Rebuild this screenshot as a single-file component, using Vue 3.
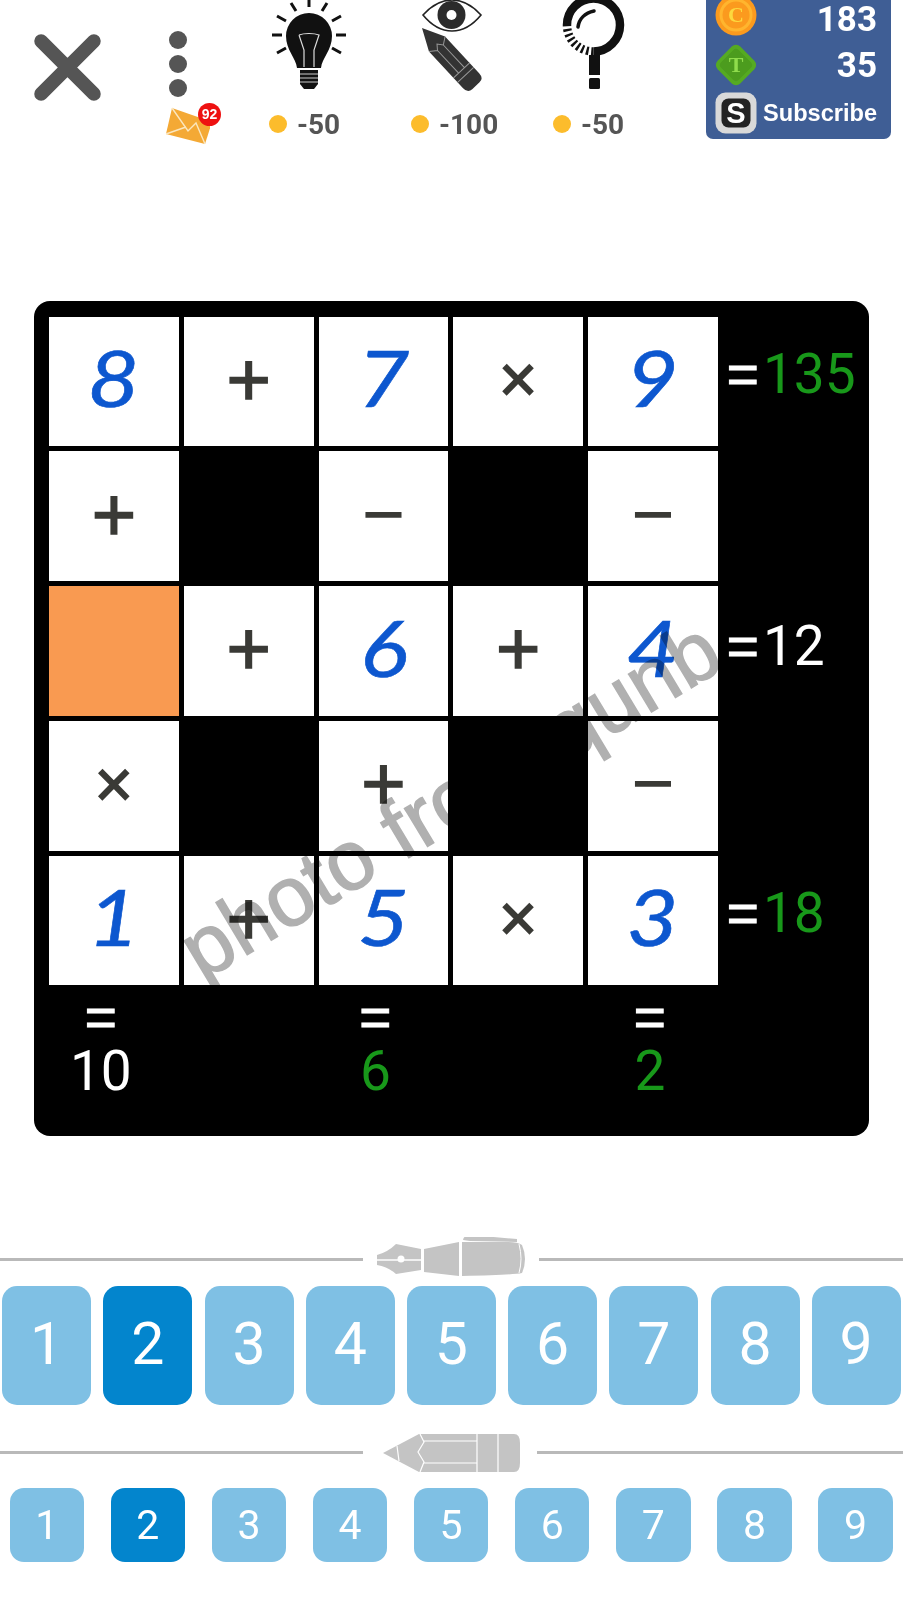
<template>
  <div class="screen">
    <header class="topbar">
      <div class="close-col">
        <svg class="close-icon" viewBox="0 0 66 66">
          <path d="M7 7 L59 59 M59 7 L7 59" />
        </svg>
      </div>
      <div class="menu-col">
        <span class="dot"></span>
        <span class="dot"></span>
        <span class="dot"></span>
        <div class="mail">
          <svg class="mail-icon" viewBox="164 100 46 46">
            <path d="M172 106 L212 120 L205 142 L166 132 Z" fill="#f4a935" />
            <path d="M172 106 L188 129 L196 121 L205 142 M166 132 L186 125" fill="none" stroke="#fbe7bf" stroke-width="1.4" />
          </svg>
          <span class="badge">92</span>
        </div>
      </div>

      <div class="hint">
        <svg class="hint-icon" viewBox="259 0 100 92">
          <g stroke="#111" stroke-width="3" stroke-linecap="butt">
            <path d="M309 0 V7 M291 3 L296 11 M327 3 L322 11 M277 16 L286 21 M341 16 L332 21 M272 35 H282 M336 35 H346 M277 53 L286 48 M341 53 L332 48" />
          </g>
          <path d="M297 68 C296 58 286 50 286 36 A23 23 0 0 1 332 36 C332 50 322 58 321 68 Z" fill="#111" />
          <path d="M299 35 C304 33 314 33 319 35 L314 50 V67 M299 35 L304 50 V67" fill="none" stroke="#ddd" stroke-width="1.2" />
          <path d="M300 70 H318 V84 L314 89 H304 L300 84 Z" fill="#111" />
          <path d="M300 74 H318 M300 78 H318 M300 82 H318" stroke="#ccc" stroke-width="1" />
        </svg>
        <div class="cost"><span class="coin"></span>-50</div>
      </div>

      <div class="hint">
        <svg class="hint-icon" viewBox="401 0 100 92">
          <path d="M423 15 C432 5 442 0 452 0 C462 0 472 5 481 15 C472 26 462 31 452 31 C442 31 432 26 423 15 Z" fill="#fff" stroke="#222" stroke-width="1.6" />
          <circle cx="451.5" cy="15" r="14" fill="#2b2b2b" />
          <circle cx="451.5" cy="15" r="5" fill="#fff" />
          <g transform="rotate(47 422 28)">
            <path d="M0 0 L22 -11 H72 Q79 -11 79 -5 V5 Q79 11 72 11 H22 Z" transform="translate(422 28)" fill="#333" />
            <path d="M22 -11 L27 -4 L22 0 L27 4 L22 11 M27 -4 H58 M27 4 H58 M58 -11 V11 M64 -11 V11" transform="translate(422 28)" fill="none" stroke="#999" stroke-width="1" />
          </g>
        </svg>
        <div class="cost"><span class="coin"></span>-100</div>
      </div>

      <div class="hint">
        <svg class="hint-icon" viewBox="543 0 100 92">
          <path d="M567 25 A26.5 26.5 0 1 1 593.5 51.5" fill="none" stroke="#111" stroke-width="8.5" />
          <path d="M593.5 51.5 A26.5 26.5 0 0 1 567 25" fill="none" stroke="#111" stroke-width="8.5" stroke-dasharray="2.4 2.6" />
          <path d="M578 27 C579 19 585 13 594 11" fill="none" stroke="#111" stroke-width="3.5" stroke-linecap="round" />
          <path d="M589 55 H600 V75 H589 Z" fill="#111" />
          <rect x="589" y="78" width="11" height="11" rx="1.5" fill="#111" />
        </svg>
        <div class="cost"><span class="coin"></span>-50</div>
      </div>

      <div class="wallet">
        <div class="wallet-row">
          <svg class="wallet-icon" viewBox="0 0 42 42">
            <circle cx="21" cy="21" r="20.5" fill="#fb9a1e" />
            <circle cx="21" cy="21" r="15" fill="none" stroke="#ffb52e" stroke-width="3" />
            <text x="21" y="28" class="coin-letter" fill="#fcd83e">C</text>
          </svg>
          <span class="wallet-value first-value">183</span>
        </div>
        <div class="wallet-row">
          <svg class="wallet-icon" viewBox="0 0 42 42">
            <rect x="5" y="5" width="32" height="32" rx="6" transform="rotate(45 21 21)" fill="#55aa22" />
            <rect x="8.5" y="8.5" width="25" height="25" rx="4" transform="rotate(45 21 21)" fill="#4c9c1e" />
            <text x="21" y="28" class="coin-letter" fill="#8fdc4c">T</text>
          </svg>
          <span class="wallet-value">35</span>
        </div>
        <div class="wallet-row sub-row">
          <svg class="wallet-icon" viewBox="0 0 42 42">
            <rect x="0.5" y="0.5" width="41" height="41" rx="10" fill="#d9d9d9" />
            <rect x="6.5" y="6.5" width="29" height="29" rx="7" fill="#232323" />
            <text x="21" y="31" class="s-letter">S</text>
          </svg>
          <span class="subscribe">Subscribe</span>
        </div>
      </div>
    </header>

    <main class="board">
      <template v-for="(item, i) in boardItems" :key="i">
        <div v-if="item.type === 'num'" class="cell num"><span>{{ item.text }}</span></div>
        <div v-else-if="item.type === 'op'" class="cell op" :class="item.cls">{{ item.text }}</div>
        <div v-else-if="item.type === 'active'" class="cell active"></div>
        <div v-else-if="item.type === 'res'" class="result" :class="{ low: !item.ok }">
          <span class="equals">=</span><span :class="{ ok: item.ok }">{{ item.text }}</span>
        </div>
        <div v-else-if="item.type === 'bottom'" class="bottom-result" :class="item.cls">
          <span class="equals">=</span>
          <span :class="{ ok: item.ok }">{{ item.text }}</span>
        </div>
        <div v-else></div>
      </template>
      <div class="watermark">photo from qunb</div>
    </main>

    <section class="pad">
      <div class="divider first">
        <span class="line"></span>
        <svg class="pen" viewBox="363 1236 176 46">
          <path d="M377 1254 Q388 1251 396 1243 L421 1248 V1269 L396 1273 Q388 1266 377 1264 Z" fill="#c4c4c4" />
          <path d="M377 1259 H421" stroke="#fff" stroke-width="1.6" />
          <circle cx="401" cy="1258" r="3.5" fill="#fff" />
          <path d="M424 1248 L459 1241 V1275 L424 1271 Z" fill="#c4c4c4" />
          <path d="M462 1241 H508 Q518 1241 522 1244 Q528 1258 522 1272 Q512 1274 462 1275 Z" fill="#c4c4c4" />
          <path d="M463 1239 Q464 1234 470 1234 L517 1238 V1241 L470 1240 Z" fill="#c4c4c4" />
          <path d="M519 1243 Q523 1258 519 1272" fill="none" stroke="#fff" stroke-width="1" />
        </svg>
        <span class="line"></span>
      </div>
      <div class="keys big">
        <button v-for="n in 9" :key="n" class="key" :class="{ selected: n === 2 }">{{ n }}</button>
      </div>

      <div class="divider second">
        <span class="line"></span>
        <svg class="pencil" viewBox="363 1430 174 44">
          <path d="M383 1452 L419 1433 H514 Q520 1433 520 1442 V1462 Q520 1471 514 1471 H419 Z" fill="#c4c4c4" />
          <path d="M397 1445 L399 1460 M420 1433 L424 1441 L418 1451 L424 1461 L420 1471 M424 1440 H477 M424 1462 H477 M477 1433 V1471 M498 1433 V1471" fill="none" stroke="#fff" stroke-width="1.2" />
        </svg>
        <span class="line"></span>
      </div>
      <div class="keys small">
        <button v-for="n in 9" :key="n" class="key" :class="{ selected: n === 2 }">{{ n }}</button>
      </div>
    </section>
  </div>
</template>

<script setup>
// Puzzle rows, one letter per cell: digits are filled in, _ is black, o is the selected cell
const rows = [
  { cells: ["8", "+", "7", "×", "9"], res: "135", ok: true },
  { cells: ["+", "_", "–", "_", "–"] },
  { cells: ["o", "+", "6", "+", "4"], res: "12", ok: false },
  { cells: ["×", "_", "+", "_", "–"] },
  { cells: ["1", "+", "5", "×", "3"], res: "18", ok: true },
];

const opClass = { "+": "plus", "–": "minus", "×": "times" };

const toItem = (c) => {
  if (c === "_") return { type: "empty" };
  if (c === "o") return { type: "active" };
  if (/\d/.test(c)) return { type: "num", text: c };
  return { type: "op", text: c, cls: opClass[c] };
};

const boardItems = [];
rows.forEach((row) => {
  row.cells.forEach((c) => boardItems.push(toItem(c)));
  boardItems.push(row.res ? { type: "res", text: row.res, ok: row.ok } : { type: "empty" });
});

boardItems.push({ type: "bottom", text: "10", ok: false, cls: "col1" });
boardItems.push({ type: "empty" });
boardItems.push({ type: "bottom", text: "6", ok: true, cls: "col3" });
boardItems.push({ type: "empty" });
boardItems.push({ type: "bottom", text: "2", ok: true, cls: "col5" });
boardItems.push({ type: "empty" });
</script>

<style>
html,
body {
  margin: 0;
  background: #fff;
}
</style>

<style scoped>
.screen {
  width: 903px;
  height: 1600px;
  overflow: hidden;
  background: #fff;
  font-family: "Liberation Sans", Arial, sans-serif;
}

.topbar {
  display: grid;
  grid-template-columns: 164px 95px 142px 142px 163px 185px;
  height: 140px;
}

.close-col {
  padding: 34px 0 0 34px;
}
.close-icon {
  display: block;
  width: 67px;
  height: 67px;
}
.close-icon path {
  fill: none;
  stroke: #555;
  stroke-width: 13.5;
  stroke-linecap: round;
}

.menu-col {
  display: flex;
  flex-direction: column;
  align-items: flex-start;
  padding-top: 31px;
}
.dot {
  width: 18px;
  height: 18px;
  margin: 0 0 6px 5px;
  border-radius: 50%;
  background: #555;
}
.mail {
  position: relative;
  margin-top: -1px;
}
.mail-icon {
  display: block;
  width: 46px;
  height: 46px;
}
.badge {
  position: absolute;
  left: 34px;
  top: 1px;
  width: 23px;
  height: 23px;
  border-radius: 50%;
  background: #ee1111;
  color: #fff;
  font-size: 14px;
  font-weight: bold;
  line-height: 23px;
  text-align: center;
}

.hint-icon {
  display: block;
  width: 100px;
  height: 92px;
}
.cost {
  display: flex;
  align-items: center;
  gap: 10px;
  margin-top: 17px;
  padding-left: 10px;
  height: 30px;
  color: #555;
  font-family: Roboto, "Liberation Sans", sans-serif;
  font-size: 28px;
  font-weight: bold;
}
.coin {
  width: 18px;
  height: 18px;
  border-radius: 50%;
  background: #fcbc2c;
}

.wallet {
  display: flex;
  flex-direction: column;
  gap: 8px;
  width: 185px;
  height: 139px;
  padding: 0 14px 0 9px;
  box-sizing: border-box;
  overflow: hidden;
  background: #3f5e95;
  border-radius: 0 0 7px 7px;
}
.wallet-row {
  display: flex;
  align-items: center;
  justify-content: space-between;
  height: 42px;
  flex-shrink: 0;
}
.wallet-row:first-child {
  margin-top: -6px;
}
.wallet-row.sub-row {
  margin-top: -2px;
}
.wallet-icon {
  width: 42px;
  height: 42px;
  flex-shrink: 0;
}
.coin-letter {
  font-family: "Liberation Serif", serif;
  font-size: 22px;
  font-weight: bold;
  text-anchor: middle;
}
.s-letter {
  font-family: "Liberation Sans", sans-serif;
  font-size: 29px;
  font-weight: bold;
  fill: #fff;
  text-anchor: middle;
}
.wallet-value {
  color: #fff;
  font-family: Roboto, "Liberation Sans", sans-serif;
  font-size: 35px;
  font-weight: bold;
}
.first-value {
  padding-top: 8px;
}
.subscribe {
  color: #fff;
  font-size: 23.6px;
  font-weight: bold;
  margin-left: 6px;
}

.board {
  position: relative;
  display: grid;
  grid-template-columns: repeat(5, 129.75px) 1fr;
  grid-template-rows: repeat(5, 129.75px) 1fr;
  gap: 5px;
  box-sizing: border-box;
  width: 835.5px;
  height: 835px;
  margin: 161px 0 0 33.5px;
  padding: 15.5px 0 0 15.5px;
  background: #000;
  border-radius: 16px;
}
.cell {
  display: flex;
  align-items: center;
  justify-content: center;
  background: #fff;
}
.cell.active {
  background: #f99a51;
}
.num {
  padding-bottom: 8px;
  color: #0d57cf;
  font-family: Lato, "Liberation Sans", sans-serif;
  font-size: 78px;
  font-style: italic;
}
.num span {
  display: block;
  transform: scaleX(1.15);
  -webkit-text-stroke: 0.6px #0d57cf;
}
.op {
  color: #3a3a36;
  -webkit-text-stroke: 1.6px #3a3a36;
}
.op.plus {
  font-size: 76px;
  padding-bottom: 4px;
}
.op.minus {
  font-size: 62px;
  padding-bottom: 14px;
}
.op.times {
  font-size: 66px;
  padding-bottom: 4px;
}
.result {
  align-self: center;
  padding-bottom: 15px;
  color: #fff;
  font-family: Roboto, "Liberation Sans", sans-serif;
  font-size: 55px;
  white-space: nowrap;
}
.result.low {
  padding-bottom: 9px;
}
.equals {
  font-family: "Liberation Sans", sans-serif;
  -webkit-text-stroke: 1px #fff;
}
.result .equals {
  margin: 0 4px 0 4px;
}
.ok {
  color: #18981a;
}
.bottom-result {
  display: flex;
  flex-direction: column;
  align-items: center;
  color: #fff;
  font-family: Roboto, "Liberation Sans", sans-serif;
  font-size: 55px;
  line-height: 54px;
}
.bottom-result.col1 {
  padding-right: 26px;
}
.bottom-result.col3 {
  padding-right: 16px;
}
.bottom-result.col5 {
  padding-right: 6px;
}
.watermark {
  position: absolute;
  left: 175px;
  top: 608px;
  color: #b0b0b0;
  font-size: 84px;
  line-height: 1;
  white-space: nowrap;
  -webkit-text-stroke: 1.4px #b0b0b0;
  mix-blend-mode: multiply;
  transform: rotate(-31deg);
  transform-origin: left bottom;
  pointer-events: none;
}

.pad {
  padding-top: 100.5px;
}
.divider {
  display: flex;
  align-items: center;
}
.divider.first {
  height: 46px;
}
.divider.second {
  height: 44px;
  margin-top: 26px;
}
.line {
  flex: 1;
  height: 3px;
  background: #b9b9b9;
}
.line:first-child {
  flex: none;
  width: 363px;
}
.pen {
  width: 176px;
  height: 46px;
}
.pencil {
  width: 174px;
  height: 44px;
}
.keys {
  display: flex;
}
.key {
  padding: 0;
  border: none;
  background: #7fc0e4;
  color: #fff;
  font-family: Roboto, "Liberation Sans", sans-serif;
}
.key.selected {
  background: #0385cd;
}
.keys.big {
  gap: 12.2px;
  margin: 3px 0 0 2.2px;
}
.keys.big .key {
  width: 89px;
  height: 119px;
  padding-bottom: 3px;
  border-radius: 15px;
  font-size: 59px;
}
.keys.small {
  gap: 26.6px;
  margin: 13px 0 0 9.5px;
}
.keys.small .key {
  width: 74.5px;
  height: 74px;
  border-radius: 14px;
  font-size: 41px;
}
</style>
